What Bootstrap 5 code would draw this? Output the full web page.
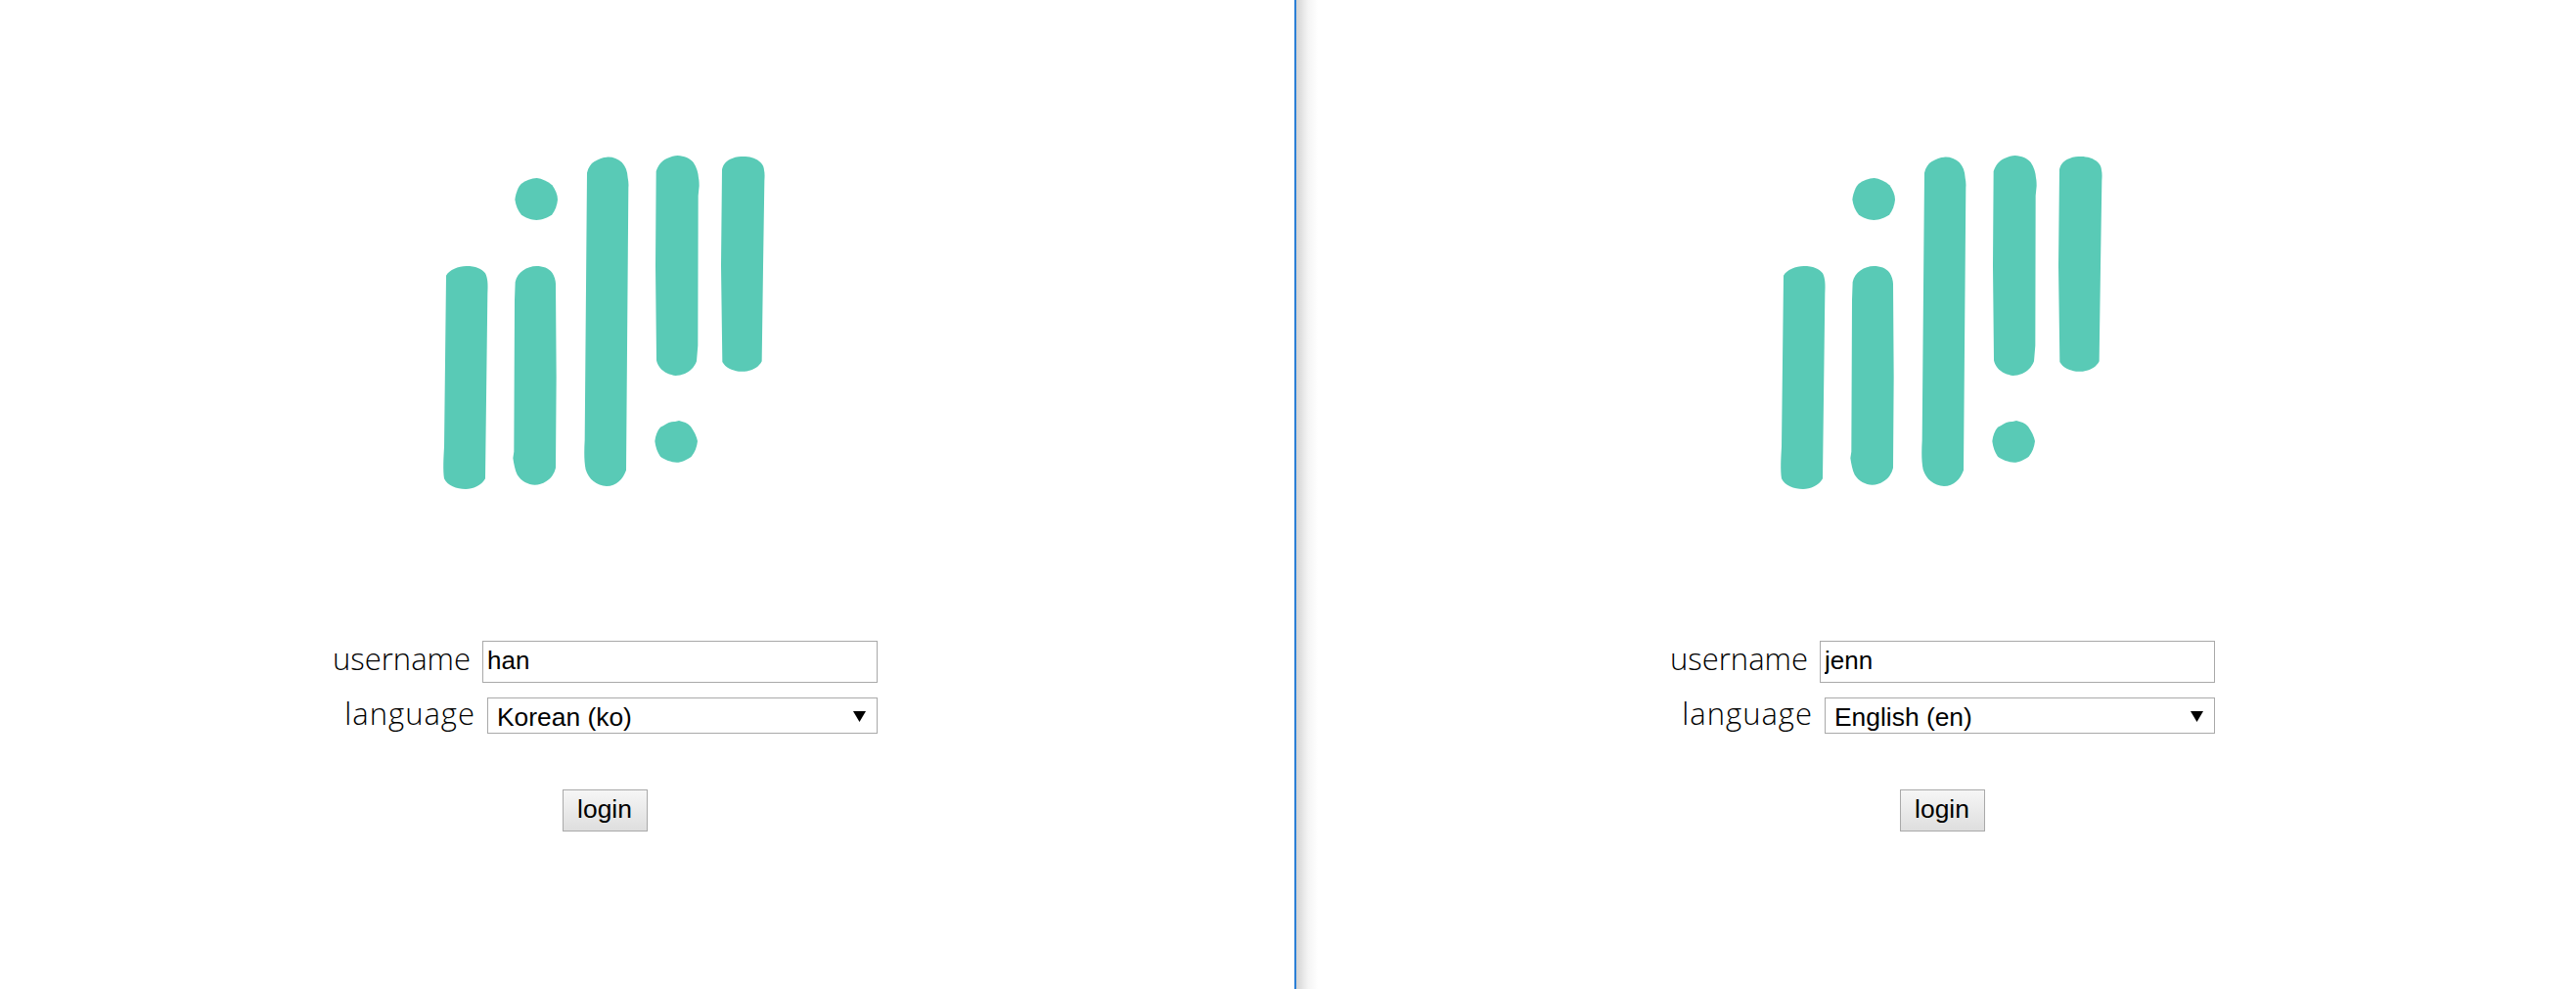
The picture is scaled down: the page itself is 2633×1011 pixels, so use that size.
<!DOCTYPE html>
<html lang="en">
<head>
  <meta charset="UTF-8">
  <meta name="viewport" content="width=device-width, initial-scale=1">
  <title>Login</title>
  <link href="https://cdn.jsdelivr.net/npm/bootstrap@5.3.0/dist/css/bootstrap.min.css" rel="stylesheet">
  <style>
    body {
      background-color: #fff;
      overflow: hidden;
    }
    .split {
      height: 1011px;
    }
    .pane-left {
      width: 1323px;
      padding: 140px 0 0 320px;
    }
    .pane-right {
      padding: 140px 0 0 362px;
      background: linear-gradient(to right, #d4d4d4, #f4f4f4 12px, #fff 22px);
    }
    .pane-divider {
      width: 2px;
      background-color: #2b7fd6;
    }
    .login-box {
      width: 596px;
    }
    .logo {
      display: block;
      width: 400px;
      height: 380px;
      margin-left: 100px;
      margin-bottom: 135px;
    }
    .field-list {
      padding-right: 19px;
      gap: 15px;
    }
    .field-label {
      font-family: "Open Sans", "Noto Sans", sans-serif;
      font-weight: 300;
      font-size: 31px;
      line-height: 1;
      color: #000;
      margin: 0 0 6px 0;
    }
    .field-user {
      gap: 12px;
    }
    .field-lang {
      gap: 12px;
    }
    .field-lang .field-label {
      letter-spacing: 1px;
      margin-bottom: 4px;
    }
    .field-user .form-control,
    .field-lang .form-select {
      font-family: "Liberation Sans", Arial, sans-serif;
      font-size: 26px;
      color: #000;
      border: 1px solid #a9a9a9;
      border-radius: 0;
      box-shadow: none;
    }
    .field-user .form-control {
      width: 404px;
      height: 43px;
      padding: 0 4px 2px;
    }
    .field-lang .form-select {
      font-size: 26.4px;
      width: 399px;
      height: 37px;
      padding: 0 30px 2px 9px;
      background-image: url("data:image/svg+xml,%3Csvg xmlns='http://www.w3.org/2000/svg' width='13' height='12'%3E%3Cpath d='M0 1h13L6.5 12z' fill='%23000'/%3E%3C/svg%3E");
      background-position: right 11px center;
      background-size: 13px 12px;
    }
    .login-btn {
      font-family: "Liberation Sans", Arial, sans-serif;
      font-size: 26.4px;
      line-height: 1;
      color: #000;
      width: 87px;
      height: 43px;
      padding: 0 0 2px;
      margin-top: 57px;
      border: 1px solid #a9a9a9;
      border-radius: 0;
      background: linear-gradient(#f6f6f6, #dedede);
    }
  </style>
</head>
<body>

<div class="split d-flex">
  <div class="pane-left flex-shrink-0">
    <div class="login-box d-flex flex-column">
      <svg class="logo" viewBox="0 0 1200 1140" aria-label="logo">
        <use href="#logoMark"/>
      </svg>
      <form class="field-list d-flex flex-column">
        <div class="field-user d-flex justify-content-end align-items-center">
          <label class="field-label" for="user1">username</label>
          <input class="form-control flex-shrink-0" id="user1" type="text" value="han">
        </div>
        <div class="field-lang d-flex justify-content-end align-items-center">
          <label class="field-label" for="lang1">language</label>
          <select class="form-select flex-shrink-0" id="lang1">
            <option>Korean (ko)</option>
            <option>English (en)</option>
          </select>
        </div>
      </form>
      <button class="login-btn btn align-self-center" type="button">login</button>
    </div>
  </div>

  <div class="pane-divider flex-shrink-0"></div>

  <div class="pane-right flex-grow-1">
    <div class="login-box d-flex flex-column">
      <svg class="logo" viewBox="0 0 1200 1140" aria-label="logo">
        <use href="#logoMark"/>
      </svg>
      <form class="field-list d-flex flex-column">
        <div class="field-user d-flex justify-content-end align-items-center">
          <label class="field-label" for="user2">username</label>
          <input class="form-control flex-shrink-0" id="user2" type="text" value="jenn">
        </div>
        <div class="field-lang d-flex justify-content-end align-items-center">
          <label class="field-label" for="lang2">language</label>
          <select class="form-select flex-shrink-0" id="lang2">
            <option>English (en)</option>
            <option>Korean (ko)</option>
          </select>
        </div>
      </form>
      <button class="login-btn btn align-self-center" type="button">login</button>
    </div>
  </div>
</div>

<svg width="0" height="0" class="d-block">
  <defs>
    <g id="logoMark" fill="#59cab6">
      <path d="M108 425C118 408 145 396 170 396C198 396 218 404 228 418C235 432 237 450 235 480L228 1048C216 1070 190 1080 168 1080C140 1080 112 1070 102 1048C98 1020 100 985 102 950Z"/>
      <path d="M319 192C322 170 330 152 338 144C352 133 370 127 386 126C402 128 420 136 433 148C443 162 450 178 450 192C449 208 442 226 433 238C420 248 402 255 385 255C368 255 350 248 338 238C328 226 321 208 319 192Z"/>
      <path d="M320 445C326 415 356 396 385 396C405 396 422 402 433 416C440 426 444 440 444 450L446 735L444 1015C440 1032 430 1048 415 1056C403 1064 392 1067 380 1067C360 1067 338 1056 326 1036C319 1022 316 1004 313 985L316 965L318 500Z"/>
      <path d="M540 110C544 94 552 82 562 76C575 68 590 62 600 62C615 60 635 66 647 78C658 90 664 105 665 125C667 135 668 145 667 155L660 1022C650 1050 630 1070 600 1071C570 1070 545 1050 536 1020C531 995 531 965 533 930Z"/>
      <path d="M752 105C758 88 768 74 785 66C798 60 808 57 818 57C838 58 856 66 866 78C876 92 881 110 882 125C884 135 884 142 884 150L881 180L880 640L876 688C868 708 855 720 840 726C830 730 820 732 812 732C795 730 775 722 764 708C758 700 754 692 753 685L750 395Z"/>
      <path d="M954 100C958 82 968 72 985 66C998 60 1010 60 1020 60C1040 60 1060 66 1072 78C1080 86 1083 95 1083 102C1085 110 1085 120 1084 135L1080 400L1076 688C1068 704 1052 714 1035 717C1025 720 1015 720 1005 719C985 716 965 708 955 690L951 395Z"/>
      <path d="M748 933C750 915 756 900 765 890L775 885C785 877 800 872 810 873L822 870C835 873 850 878 858 888C868 902 877 920 879 933C877 950 871 968 860 980C847 990 830 998 815 998C798 997 778 990 765 980C756 968 750 950 748 933Z"/>
    </g>
  </defs>
</svg>

</body>
</html>
